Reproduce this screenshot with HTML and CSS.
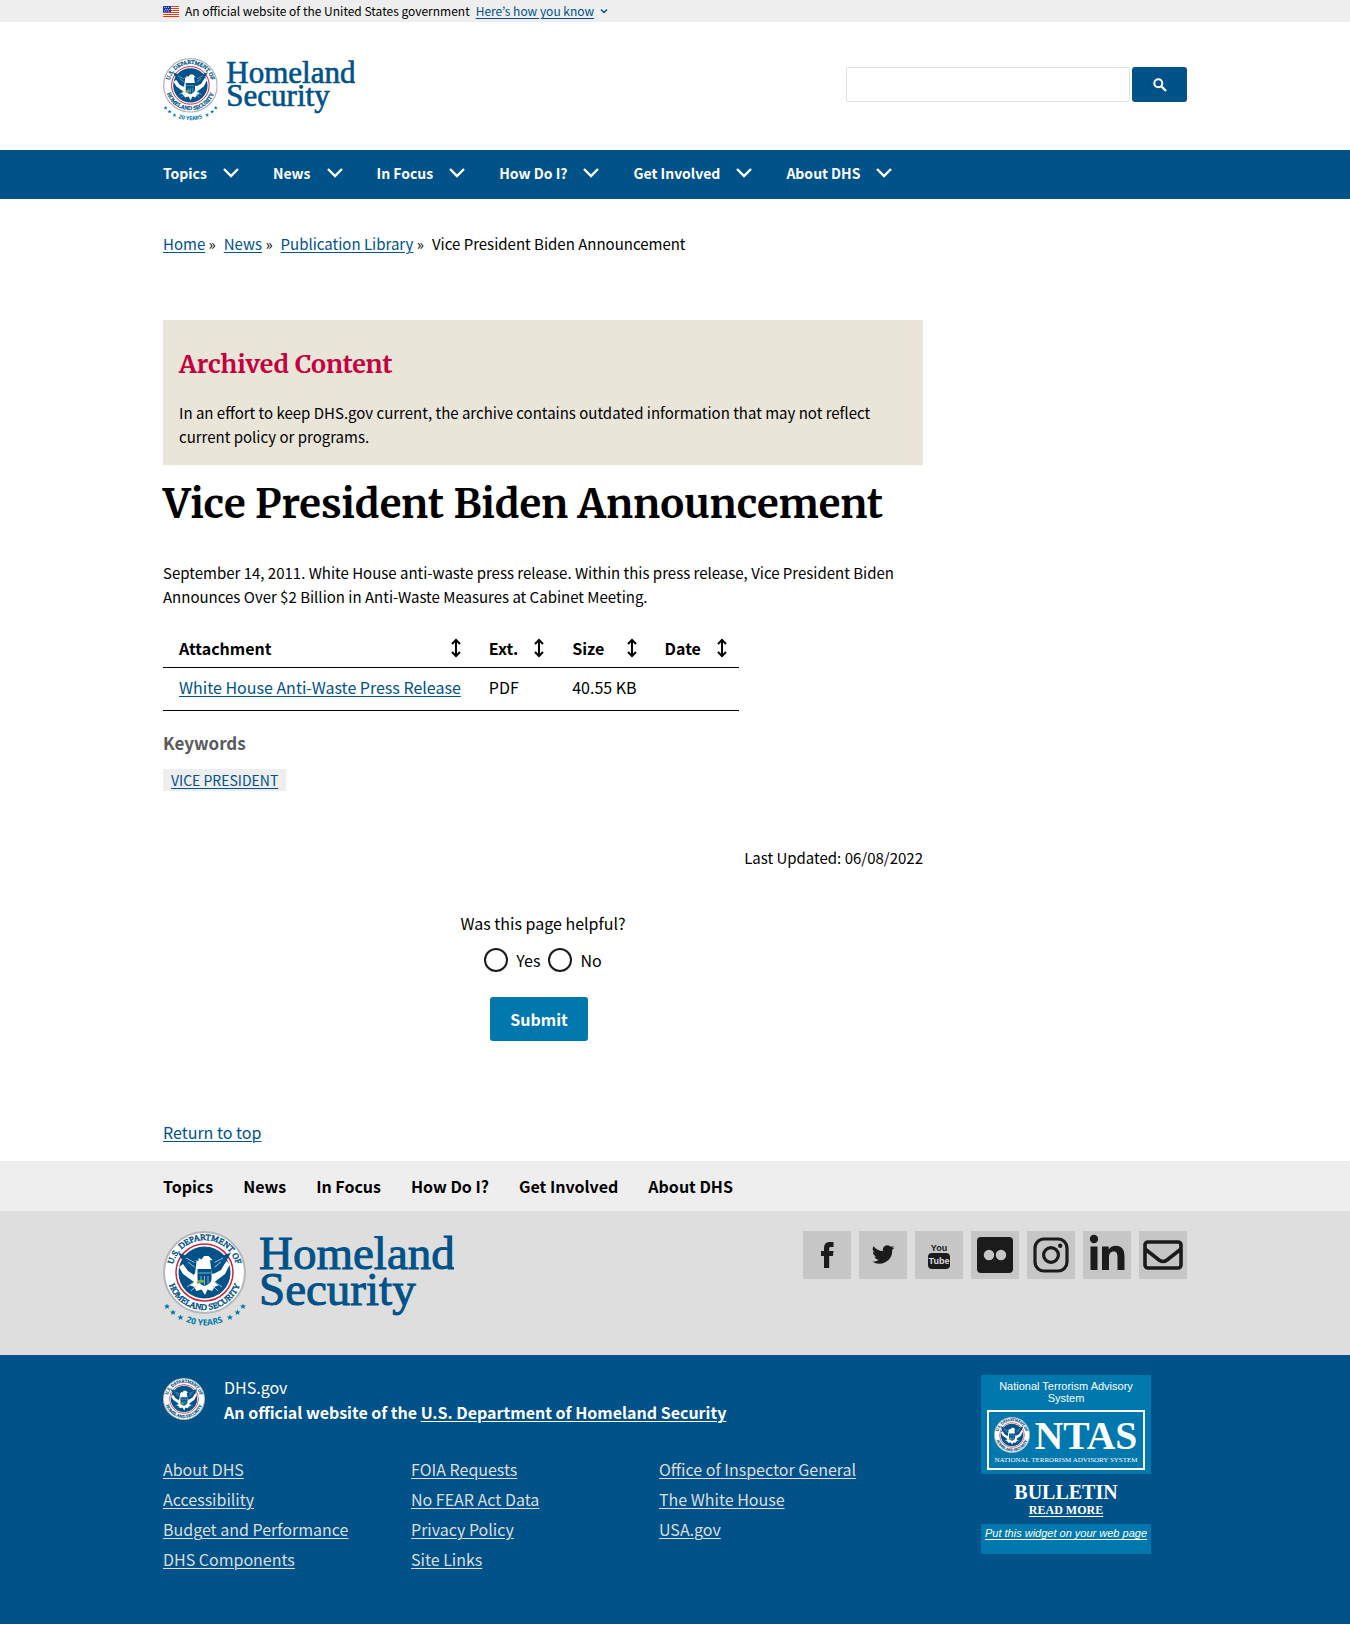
FILE: index.html
```html
<!DOCTYPE html>
<html lang="en">
<head>
<meta charset="utf-8">
<meta name="viewport" content="width=device-width, initial-scale=1">
<title>Vice President Biden Announcement | Homeland Security</title>
<link rel="stylesheet" href="styles.css">
</head>
<body>
<svg class="sprite" aria-hidden="true">
  <defs>
    <path id="ring-top" d="M18 83a65 65 0 0 1 130 0"/>
    <path id="ring-bottom" d="M8 83a75 75 0 0 0 150 0"/>
    <path id="ring-years" d="M-14 92a97 97 0 0 0 194 0"/>
    <path id="star" d="M0-6l1.700 4H6L2.600.8 3.800 5 0 2.500-3.800 5-2.600.8-6-2h4.300z"/>
  </defs>
  <symbol id="seal" viewBox="0 0 166 166">
    <circle cx="83" cy="83" r="81" fill="#fff" stroke="#b4b7ba" stroke-width="4"/>
    <circle cx="83" cy="83" r="57" fill="#fff" stroke="#c8243f" stroke-width="3"/>
    <circle cx="83" cy="83" r="52" fill="#005288"/>
    <path fill="#fff" d="M32 72l8-6 10 14 12 8 4-24-4-6 9 2v-6l6 3 5-7h9l9 9-6-1 1 8 3 20 14-8 15-18 7 6-10 20-21 16 8 7-7 2-6 9-9-3-5 11-7-11-10 3-6-9-7-2 8-7-22-16z"/>
    <path fill="#005288" d="M30 43l18 7 19 10-3 26-14-8-10-17zM136 43l-18 7-20 10 3 26 15-8 10-17z"/>
    <path fill="#005288" d="M69 76h28v19c0 8-6 12-14 15-8-3-14-7-14-15z"/>
    <path d="M71 84h24M76 90v15M83 90v18M90 90v15" stroke="#7fb2d3" stroke-width="2"/>
    <path d="M50 62l13 10M46 54l17 9M116 62l-13 10M120 54l-17 9M48 112l14-10M56 120l10-10M118 112l-14-10M110 120l-10-10" stroke="#9cc4dd" stroke-width="2"/>
    <path d="M68 104q8-7 14-2" fill="none" stroke="#7eb541" stroke-width="5"/>
    <text class="ring-text" text-anchor="middle"><textPath href="#ring-top" startOffset="50%">U.S. DEPARTMENT OF</textPath></text>
    <text class="ring-text" text-anchor="middle"><textPath href="#ring-bottom" startOffset="50%">HOMELAND SECURITY</textPath></text>
  </symbol>
  <symbol id="logo" viewBox="0 0 582 194">
    <use href="#seal" width="166" height="166"/>
    <text class="years-text" text-anchor="middle"><textPath href="#ring-years" startOffset="50%">20 YEARS</textPath></text>
    <g fill="#0078ae">
      <use href="#star" x="8" y="151"/><use href="#star" x="20" y="163"/><use href="#star" x="35" y="173"/>
      <use href="#star" x="134" y="173"/><use href="#star" x="149" y="163"/><use href="#star" x="160" y="151"/>
    </g>
    <text class="logo-text" x="192" y="76">Homeland</text>
    <text class="logo-text" x="192" y="147">Security</text>
  </symbol>
  <symbol id="chevron" viewBox="0 0 16 10"><path d="M1 1l7 7 7-7" fill="none" stroke="currentColor" stroke-width="2.400"/></symbol>
  <symbol id="sort" viewBox="0 0 10 20"><path d="M5 2v16M1 6l4-4 4 4M1 14l4 4 4-4" fill="none" stroke="currentColor" stroke-width="2"/></symbol>
</svg>

<div class="banner">
  <div class="wrap banner-row">
    <svg class="flag" viewBox="0 0 16 11" aria-hidden="true"><path fill="#fff" d="M0 0h16v11H0z"/><path stroke="#db3e1f" d="M0 .5h16M0 2.500h16M0 4.500h16M0 6.500h16M0 8.500h16M0 10.500h16"/><path fill="#1e33b1" d="M0 0h8v6H0z"/><path stroke="#fff" stroke-dasharray="1 1" d="M1 1.500h6M2 3.500h5M1 5h6" stroke-width=".7"/></svg>
    <span>An official website of the United States government</span>
    <a href="#know">Here’s how you know</a>
    <svg class="banner-chevron" viewBox="0 0 16 10" aria-hidden="true"><path d="M2 2l6 6 6-6" fill="none" stroke="currentColor" stroke-width="3"/></svg>
  </div>
</div>

<header class="header">
  <div class="wrap header-row">
    <a href="#home" aria-label="Homeland Security home"><svg class="logo"><use href="#logo"/></svg></a>
    <form class="search" role="search">
      <input class="search-input" type="search" aria-label="Search">
      <button class="search-button" type="button" aria-label="Search"><svg viewBox="0 0 14 14" width="14" height="14"><path d="M8.500 8.500l4.500 4.500" stroke="#fff" stroke-width="2.400"/><circle cx="5.300" cy="5.300" r="4" fill="none" stroke="#fff" stroke-width="2"/></svg></button>
    </form>
  </div>
</header>

<nav class="main-nav" aria-label="Primary">
  <div class="wrap main-nav-row">
    <button type="button">Topics<svg><use href="#chevron"/></svg></button>
    <button type="button">News<svg><use href="#chevron"/></svg></button>
    <button type="button">In Focus<svg><use href="#chevron"/></svg></button>
    <button type="button">How Do I?<svg><use href="#chevron"/></svg></button>
    <button type="button">Get Involved<svg><use href="#chevron"/></svg></button>
    <button type="button">About DHS<svg><use href="#chevron"/></svg></button>
  </div>
</nav>

<div class="wrap">
  <nav class="breadcrumb" aria-label="Breadcrumb">
    <span><a href="#home">Home</a> »</span>
    <span><a href="#news">News</a> »</span>
    <span><a href="#library">Publication Library</a> »</span>
    <span>Vice President Biden Announcement</span>
  </nav>

  <main class="content">
    <section class="archived">
      <h2>Archived Content</h2>
      <p>In an effort to keep DHS.gov current, the archive contains outdated information that may not reflect current policy or programs.</p>
    </section>
    <h1>Vice President Biden Announcement</h1>
    <p class="intro">September 14, 2011. White House anti-waste press release. Within this press release, Vice President Biden Announces Over $2 Billion in Anti-Waste Measures at Cabinet Meeting.</p>

    <table class="files">
      <thead>
        <tr>
          <th scope="col"><span>Attachment<svg><use href="#sort"/></svg></span></th>
          <th scope="col"><span>Ext.<svg><use href="#sort"/></svg></span></th>
          <th scope="col"><span>Size<svg><use href="#sort"/></svg></span></th>
          <th scope="col"><span>Date<svg><use href="#sort"/></svg></span></th>
        </tr>
      </thead>
      <tbody>
        <tr><td><a href="#file">White House Anti-Waste Press Release</a></td><td>PDF</td><td>40.55 KB</td><td></td></tr>
      </tbody>
    </table>

    <h3>Keywords</h3>
    <a class="tag" href="#vp">VICE PRESIDENT</a>
    <p class="updated">Last Updated: 06/08/2022</p>

    <form class="helpful">
      <fieldset>
        <legend>Was this page helpful?</legend>
        <div class="choices">
          <input type="radio" name="helpful" id="yes"><label for="yes">Yes</label>
          <input type="radio" name="helpful" id="no"><label for="no">No</label>
        </div>
      </fieldset>
      <button class="submit" type="button">Submit</button>
    </form>
  </main>
  <a class="to-top" href="#top">Return to top</a>
</div>

<footer>
  <nav class="footer-nav" aria-label="Footer">
    <div class="wrap footer-nav-row">
      <a href="#topics">Topics</a><a href="#news">News</a><a href="#focus">In Focus</a><a href="#how">How Do I?</a><a href="#involved">Get Involved</a><a href="#about">About DHS</a>
    </div>
  </nav>
  <div class="footer-brand">
    <div class="wrap footer-brand-row">
      <svg class="footer-logo" role="img" aria-label="Homeland Security"><use href="#logo"/></svg>
      <div class="social">
        <a href="#facebook" aria-label="Facebook"><svg viewBox="0 0 48 48"><path d="M21 37V25h-3v-5h3v-2.500c0-4.500 2-6.500 6-6.500h3.500v5H28c-1.500 0-1.800.6-1.800 2v2h4.300l-.6 5h-3.700v12z"/></svg></a>
        <a href="#twitter" aria-label="Twitter"><svg viewBox="0 0 48 48"><path d="M35.500 16.500a9 9 0 0 1-2.700.8 4.600 4.600 0 0 0 2-2.600 9 9 0 0 1-2.900 1.100 4.600 4.600 0 0 0-7.900 4.200 13 13 0 0 1-9.500-4.800 4.600 4.600 0 0 0 1.500 6.200 4.500 4.500 0 0 1-2.100-.6 4.600 4.600 0 0 0 3.700 4.600 5 5 0 0 1-2.100.1 4.600 4.600 0 0 0 4.300 3.200A9.300 9.300 0 0 1 13 30.600a13.100 13.100 0 0 0 20.200-11.700 9 9 0 0 0 2.300-2.400z"/></svg></a>
        <a href="#youtube" aria-label="YouTube"><svg viewBox="0 0 48 48"><text class="yt" x="24" y="20" text-anchor="middle">You</text><rect x="13" y="22" width="22" height="16" rx="4"/><text class="yt yt-light" x="24" y="33" text-anchor="middle">Tube</text></svg></a>
        <a href="#flickr" aria-label="Flickr"><svg viewBox="0 0 48 48"><path fill-rule="evenodd" d="M10 6h28q4 0 4 4v28q0 4-4 4H10q-4 0-4-4V10q0-4 4-4zm8 12.800a5.200 5.200 0 1 0 0 10.400 5.200 5.200 0 0 0 0-10.400zm12 0a5.200 5.200 0 1 0 0 10.400 5.200 5.200 0 0 0 0-10.400z"/></svg></a>
        <a href="#instagram" aria-label="Instagram"><svg viewBox="0 0 48 48"><g fill="none" stroke="#1b1b1b" stroke-width="3.200"><rect x="8" y="8" width="32" height="32" rx="9"/><circle cx="24" cy="24" r="7.400"/></g><circle cx="33.200" cy="14.800" r="2.200"/></svg></a>
        <a href="#linkedin" aria-label="LinkedIn"><svg viewBox="0 0 48 48"><circle cx="11" cy="8" r="4.200"/><path d="M7.500 15.500h7V39h-7zM19 15.500h6.700v3c1.300-2.300 3.800-3.700 7-3.700 6.500 0 8.800 4.200 8.800 10.700V39h-7V27c0-4-.6-6.500-3.800-6.500-3.500 0-4.700 2.500-4.700 6.500v12h-7z"/></svg></a>
        <a href="#mail" aria-label="Email"><svg viewBox="0 0 48 48"><g fill="none" stroke="#1b1b1b" stroke-width="3.600"><rect x="6" y="11" width="36" height="26" rx="3"/><path d="M6 18l14 11q4 3 8 0l14-11"/></g></svg></a>
      </div>
    </div>
  </div>
  <div class="identifier">
    <div class="wrap identifier-row">
      <div class="identifier-main">
        <div class="masthead">
          <svg class="small-seal" aria-hidden="true"><use href="#seal"/></svg>
          <p>DHS.gov<br><strong>An official website of the <a href="#dhs">U.S. Department of Homeland Security</a></strong></p>
        </div>
        <div class="links">
          <ul>
            <li><a href="#1">About DHS</a></li>
            <li><a href="#2">Accessibility</a></li>
            <li><a href="#3">Budget and Performance</a></li>
            <li><a href="#4">DHS Components</a></li>
          </ul>
          <ul>
            <li><a href="#5">FOIA Requests</a></li>
            <li><a href="#6">No FEAR Act Data</a></li>
            <li><a href="#7">Privacy Policy</a></li>
            <li><a href="#8">Site Links</a></li>
          </ul>
          <ul>
            <li><a href="#9">Office of Inspector General</a></li>
            <li><a href="#10">The White House</a></li>
            <li><a href="#11">USA.gov</a></li>
          </ul>
        </div>
      </div>
      <aside class="ntas">
        <div class="ntas-head">
          <p>National Terrorism Advisory System</p>
          <svg class="ntas-logo" viewBox="0 0 316 120">
            <rect x="2" y="2" width="312" height="116" fill="none" stroke="#fff" stroke-width="4"/>
            <use href="#seal" x="14" y="14" width="72" height="72"/>
            <text class="ntas-big" x="198" y="77" text-anchor="middle">NTAS</text>
            <text class="ntas-small" x="158" y="104" text-anchor="middle">NATIONAL TERRORISM ADVISORY SYSTEM</text>
          </svg>
        </div>
        <div class="ntas-body">
          <span class="bulletin">BULLETIN</span>
          <a href="#bulletin">READ MORE</a>
        </div>
        <div class="ntas-foot"><a href="#widget">Put this widget on your web page</a></div>
      </aside>
    </div>
  </div>
</footer>
</body>
</html>
```
FILE: styles.css
```css
:root {
  --blue: #005288;
  --bright: #0078ae;
  --sans: "Source Sans Pro", "Noto Sans CJK JP", sans-serif;
  --serif: "Merriweather", "DejaVu Serif", serif;
}
* { box-sizing: border-box; }
body { margin: 0; background: #fff; color: #000; font-family: var(--sans); font-size: 16px; line-height: 24px; }
h1, h2, h3, p, ul, fieldset, legend { margin: 0; padding: 0; border: 0; }
a { color: var(--blue); text-decoration-thickness: 1px; text-underline-offset: 2px; }
button { border: 0; font-family: inherit; cursor: pointer; }
svg { display: block; }
.sprite { position: absolute; width: 0; height: 0; visibility: hidden; }
.wrap { max-width: 1088px; margin: 0 auto; padding: 0 32px; }

.ring-text { font: 17px "Liberation Serif", serif; fill: var(--blue); stroke: var(--blue); stroke-width: 1px; }
.years-text { font: bold 17px "Open Sans", sans-serif; fill: var(--bright); }
.logo-text { font: 94px "Liberation Serif", serif; fill: var(--blue); stroke: var(--blue); stroke-width: 2px; }

.banner { background: #eee; }
.banner-row { display: flex; align-items: center; gap: 6px; height: 22px; font-size: 12px; }
.flag { width: 16px; height: 11px; }
.banner-chevron { width: 8px; height: 6px; color: var(--blue); }

.header-row { display: flex; justify-content: space-between; padding-top: 36px; padding-bottom: 28px; }
.logo { width: 192px; height: 64px; }
.search { display: flex; gap: 2px; padding-top: 9px; }
.search-input { width: 284px; height: 35px; border: 1px solid #dfe1e5; border-radius: 2px; background: #fff; padding: 0 8px; }
.search-button { display: flex; align-items: center; justify-content: center; width: 55px; height: 35px; border-radius: 3px; background: var(--blue); }

.main-nav { background: var(--blue); }
.main-nav-row { display: flex; gap: 34px; }
.main-nav button { display: flex; align-items: center; gap: 16px; padding: 11px 0 14px; background: none; color: #fff; font-size: 14px; font-weight: 700; line-height: 24px; }
.main-nav svg { width: 16px; height: 10px; }

.breadcrumb { display: flex; flex-wrap: wrap; gap: 8px; padding: 33px 0 64px; font-size: 15px; }
.content { max-width: 760px; }
.archived { background: #e9e5d9; padding: 24px 16px 16px; }
.archived h2 { color: #c4003e; font: bold 25px/40px var(--serif); }
.archived p { margin-top: 17px; font-size: 15px; }
h1 { font: bold 40px/48px var(--serif); margin-top: 15px; }
.intro { margin-top: 33px; font-size: 15px; }

.files { border-collapse: collapse; margin-top: 20px; }
.files th, .files td { padding: 7px 12px 7px 16px; text-align: left; border-bottom: 1px solid #000; }
.files td { padding-bottom: 11px; }
.files th span { display: flex; align-items: center; justify-content: space-between; gap: 16px; }
.files th svg { width: 10px; height: 20px; }
h3 { margin-top: 19px; color: #5a5a5a; font-size: 17px; line-height: 26px; }
.tag { display: inline-block; margin-top: 13px; padding: 0 8px; background: #eee; font-size: 14px; line-height: 22px; }
.updated { margin-top: 55px; text-align: right; font-size: 15px; }

.helpful { margin-top: 41px; text-align: center; }
.helpful legend { margin: 0 auto; }
.choices { display: flex; justify-content: center; gap: 8px; padding-top: 13px; }
.choices input { appearance: none; width: 24px; height: 24px; margin: 0; border: 2px solid #1b1b1b; border-radius: 50%; background: #fff; }
.submit { margin: 25px 8px 0 0; padding: 10px 20px; border-radius: 3px; background: var(--bright); color: #fff; font-size: 16px; font-weight: 700; line-height: 24px; }
.to-top { display: inline-block; margin: 79px 0 17px; }

.footer-nav { background: #eee; }
.footer-nav-row { display: flex; gap: 30px; padding-top: 13px; padding-bottom: 13px; }
.footer-nav a { color: #000; font-weight: 700; text-decoration: none; }
.footer-brand { background: #dedede; }
.footer-brand-row { display: flex; justify-content: space-between; padding-top: 20px; padding-bottom: 27px; }
.footer-logo { width: 291px; height: 97px; }
.social { display: flex; gap: 8px; }
.social a { width: 48px; height: 48px; background: #c6c6c6; }
.social svg { fill: #1b1b1b; }
.yt { font: bold 9px "Liberation Sans", sans-serif; }
.yt-light { fill: #dedede; }

.identifier { background: var(--blue); color: #fff; }
.identifier a { color: #fff; }
.identifier-row { display: flex; justify-content: space-between; padding-top: 20px; padding-bottom: 50px; }
.masthead { display: flex; gap: 19px; line-height: 25px; }
.small-seal { width: 42px; height: 42px; margin-top: 3px; }
.links { display: grid; grid-template-columns: repeat(3, 248px); margin-top: 29px; }
.links ul { list-style: none; line-height: 30px; }
.identifier .links a { color: #dcdee0; }

.ntas { width: 170px; margin-right: 36px; font-family: "Liberation Sans", Arial, sans-serif; font-size: 11px; line-height: 12px; text-align: center; }
.ntas-head { background: var(--bright); padding: 5px 6px 4px; }
.ntas-logo { width: 158px; height: 60px; margin-top: 6px; }
.ntas-big { font: bold 79px "Liberation Serif", serif; fill: #fff; }
.ntas-small { font: 14px "Liberation Serif", serif; fill: #fff; }
.ntas-body { display: flex; flex-direction: column; align-items: center; padding: 7px 0 6px; font-family: "Liberation Serif", serif; font-weight: 700; }
.bulletin { font-size: 20px; line-height: 22px; }
.ntas-body a { font-size: 12px; line-height: 15px; }
.ntas-foot { background: var(--bright); padding: 3px 0 15px; font-style: italic; white-space: nowrap; }
```
